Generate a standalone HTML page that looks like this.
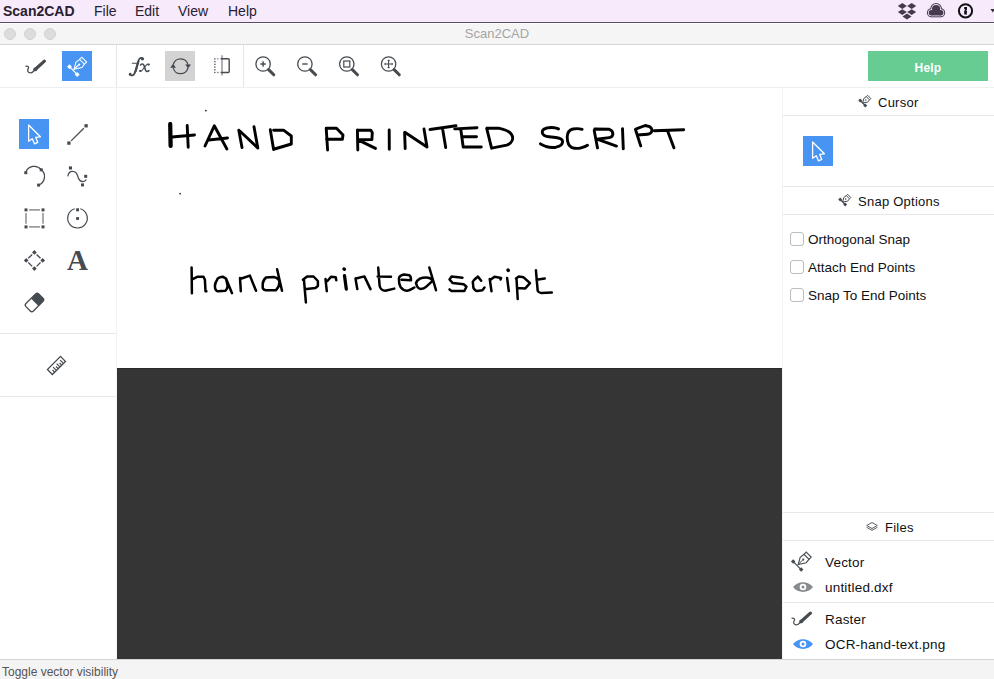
<!DOCTYPE html>
<html><head><meta charset="utf-8">
<style>
*{margin:0;padding:0;box-sizing:border-box}
html,body{width:994px;height:679px;overflow:hidden;background:#fff;font-family:"Liberation Sans",sans-serif;color:#1a1a1a}
.a{position:absolute}
.menubar{left:0;top:0;width:994px;height:23px;background:#f6eafb;border-bottom:1px solid #5b4b68}
.menubar span{position:absolute;top:3px;font-size:14px;color:#2a2030}
.titlebar{left:0;top:24px;width:994px;height:21px;background:#f5f5f5;border-bottom:1px solid #d6d6d6}
.dot{width:12px;height:12px;border-radius:50%;background:#dcdcdc;border:1px solid #d2d2d2;top:4px}
.hline{height:1px;background:#e8e8e8}
.vline{width:1px;background:#f3f3f3}
.rp-h{font-size:13px;color:#111;letter-spacing:0.25px}
.cb{width:14px;height:14px;border:1px solid #b9bcc0;border-radius:3px;background:#fff}
.lbl{font-size:13.5px;color:#111;letter-spacing:0.2px}
.cbl{font-size:13.5px;color:#111;letter-spacing:0px}
</style></head><body>
<!-- menu bar -->
<div class="a menubar">
  <span style="left:3px;font-weight:bold">Scan2CAD</span>
  <span style="left:94px">File</span>
  <span style="left:135px">Edit</span>
  <span style="left:178px">View</span>
  <span style="left:228px">Help</span>
</div>
<!-- title bar -->
<div class="a titlebar">
  <div class="a dot" style="left:4px"></div>
  <div class="a dot" style="left:24px"></div>
  <div class="a dot" style="left:44px"></div>
  <div class="a" style="left:0;width:994px;top:2px;text-align:center;font-size:13px;color:#a4a4a4">Scan2CAD</div>
</div>
<!-- toolbar -->
<div class="a" style="left:62px;top:51px;width:30px;height:30px;background:#4794f3"></div>
<div class="a" style="left:165px;top:51px;width:30px;height:30px;background:#d3d3d3"></div>
<div class="a vline" style="left:116px;top:45px;height:42px;background:#e6e6e6"></div>
<div class="a vline" style="left:243px;top:45px;height:42px;background:#e6e6e6"></div>
<div class="a hline" style="left:0;top:87px;width:994px;background:#efefef"></div>
<div class="a" style="left:868px;top:51px;width:120px;height:30px;background:#66cc92"></div><div class="a" style="left:868px;top:53px;width:120px;height:30px;color:#fff;font-weight:bold;font-size:12px;text-align:center;line-height:30px;letter-spacing:0.2px">Help</div>


<svg class="a" style="left:0;top:0" width="994" height="679" viewBox="0 0 994 679">
<g id="toolbar-icons" fill="none" stroke="#454b51" stroke-width="1.3">
  <!-- raster pencil -->
  <path d="M25.5,66.3 C27.6,65.6 29.3,66.6 28.2,68.6 C27,70.6 27.9,73 30.6,72.9 C31.9,72.8 32.9,72.1 33.6,71.2"/>
  <line x1="35.4" y1="69.2" x2="44.4" y2="61.1" stroke-width="3.2" stroke-linecap="round"/>
  <path d="M33.1,71.4 L34,67.9 L36.7,70.5 Z" fill="#454b51" stroke-width="0.6"/>
  <!-- vector pen (white) -->
  <g stroke="#fff" stroke-width="1.1">
    <line x1="69.5" y1="66.7" x2="77.2" y2="74.5"/>
    <rect x="68.3" y="65.5" width="2.4" height="2.4" fill="#fff" transform="rotate(45 69.5 66.7)"/>
    <rect x="76" y="73.3" width="2.4" height="2.4" fill="#fff" transform="rotate(45 77.2 74.5)"/>
    <path d="M74,69.3 L75.9,62.2 L79.6,59.4 L84.4,64.2 L81.8,67.6 Z"/>
    <path d="M79.6,59.4 L81.8,57.2 L86.6,62 L84.4,64.2"/>
    <line x1="74" y1="69.3" x2="78.5" y2="65"/>
    <circle cx="79.2" cy="64.6" r="1.1" fill="#fff" stroke="none"/>
  </g>
  <!-- rotate -->
  <path d="M173.3,64.6 A7.5,7.5 0 0 1 188,65"/>
  <path d="M187.9,67.9 A7.5,7.5 0 0 1 173.2,67.5"/>
  <path d="M170.2,67.8 L173.1,63.8 L176,67.8 Z" fill="#454b51" stroke="none"/>
  <path d="M185.2,64.6 L188.1,68.6 L191,64.6 Z" fill="#454b51" stroke="none"/>
  <!-- mirror -->
  <line x1="222" y1="55.3" x2="222" y2="75.6" stroke="#9a9ea2" stroke-width="1.6"/>
  <path d="M220.6,58.8 H228.2 Q229.2,58.8 229.2,59.8 V71.5 Q229.2,72.5 228.2,72.5 H220.6" stroke-width="1.4"/>
  <g fill="#454b51" stroke="none"><rect x="214.2" y="58.2" width="1.3" height="1.3"/><rect x="214.2" y="61" width="1.3" height="1.3"/><rect x="214.2" y="63.7" width="1.3" height="1.3"/><rect x="214.2" y="66.4" width="1.3" height="1.3"/><rect x="214.2" y="69.1" width="1.3" height="1.3"/><rect x="214.2" y="71.8" width="1.3" height="1.3"/><rect x="217.2" y="58.2" width="1.4" height="1.3" fill="#8a8e92"/><rect x="217.2" y="71.8" width="1.4" height="1.3" fill="#6a6e72"/></g>
  <!-- zoom in -->
  <circle cx="263.1" cy="64" r="7.2"/>
  <line x1="268.6" y1="69.6" x2="273.8" y2="74.8" stroke-width="3" stroke-linecap="round"/>
  <path d="M260.4,64 H265.8 M263.1,61.3 V66.7" stroke-width="1.4"/>
  <!-- zoom out -->
  <circle cx="304.9" cy="64" r="7.2"/>
  <line x1="310.4" y1="69.6" x2="315.6" y2="74.8" stroke-width="3" stroke-linecap="round"/>
  <path d="M302.2,64 H307.6" stroke-width="1.4"/>
  <!-- zoom fit -->
  <circle cx="346.8" cy="64" r="7.2"/>
  <line x1="352.3" y1="69.6" x2="357.5" y2="74.8" stroke-width="3" stroke-linecap="round"/>
  <rect x="343.8" y="61" width="6" height="6" stroke-width="1.2"/>
  <!-- zoom pan -->
  <circle cx="388.6" cy="64" r="7.2"/>
  <line x1="394.1" y1="69.6" x2="399.3" y2="74.8" stroke-width="3" stroke-linecap="round"/>
  <path d="M385,64 H392.2 M388.6,60.4 V67.6" stroke-width="1.1"/>
  <path d="M384,64 L385.5,62.5 V65.5 Z M393.2,64 L391.7,62.5 V65.5 Z M388.6,59.4 L387.1,60.9 H390.1 Z M388.6,68.6 L387.1,67.1 H390.1 Z" fill="#454b51" stroke="none"/>
</g>
</svg>
<svg class="a" style="left:0;top:0" width="994" height="100" viewBox="0 0 994 100"><g fill="none" stroke="#454b51" stroke-linecap="round">
  <path d="M143.2,58.6 C142,57.2 139.6,57.6 138.7,60.2 C137.7,63.2 136.3,69 134.8,72.8 C133.8,75.4 131.4,76.2 129.6,74.6" stroke-width="1.8"/>
  <path d="M138.3,61.5 C137.5,64.5 136.5,68.5 135.5,71.5" stroke-width="2.2"/>
  <circle cx="142.4" cy="59.3" r="1.3" fill="#454b51" stroke="none"/>
  <circle cx="130.2" cy="74.1" r="1.3" fill="#454b51" stroke="none"/>
  <path d="M132.3,63.3 H138.7" stroke-width="1.1"/>
  <g transform="translate(0.8,0)"><path d="M139.8,65 C141.2,63.5 142.6,63.8 143.2,65.6 L144.6,69.8 C145.2,71.6 146.8,72 148.1,70.6" stroke-width="1.6"/>
  <path d="M148.3,64.4 C147.2,63.7 146.1,64.2 145,65.6 L141.6,70 C140.6,71.4 139.6,71.6 139,70.6" stroke-width="1.1"/>
  <circle cx="147.9" cy="64.6" r="1.1" fill="#454b51" stroke="none"/>
  <circle cx="139.5" cy="71" r="1.1" fill="#454b51" stroke="none"/></g>
</g></svg>

<!-- left panel -->
<div class="a vline" style="left:116px;top:88px;height:571px"></div>
<div class="a" style="left:19px;top:119px;width:30px;height:30px;background:#4794f3"></div>
<div class="a hline" style="left:0;top:333px;width:116px"></div>
<div class="a hline" style="left:0;top:396px;width:116px"></div>


<svg class="a" style="left:0;top:0" width="994" height="679" viewBox="0 0 994 679">
<g fill="none" stroke="#454b51" stroke-width="1.3">
  <!-- select arrow white -->
  <path d="M28.6,125 V141.3 L32.3,138.8 L34.6,143.9 L37.8,142.4 L35.7,137.4 L40.4,136.8 Z" stroke="#fff" stroke-width="1.3" stroke-linejoin="round"/>
  <!-- line tool -->
  <line x1="71.1" y1="140.9" x2="83.8" y2="128.2" stroke-width="1.3"/>
  <rect x="67.25" y="141.45" width="3.3" height="3.3" fill="#454b51" stroke="none"/>
  <rect x="84.45" y="124.15" width="3.3" height="3.3" fill="#454b51" stroke="none"/>
  <!-- arc tool -->
  <path d="M25.8,172.2 A9,9 0 0 1 41.2,169.6 A9,9 0 0 1 38.6,185"/>
  <rect x="24.3" y="171.2" width="3" height="3" fill="#454b51" stroke="none"/>
  <rect x="39.7" y="168.3" width="3" height="3" fill="#454b51" stroke="none"/>
  <rect x="37.1" y="183.6" width="3" height="3" fill="#454b51" stroke="none"/>
  <!-- curve tool -->
  <path d="M67.7,176.3 C68.5,172.5 71,171.2 72.6,171.3 C75.5,171.4 77,173.5 77.7,176 C78.5,179.5 80.5,181.6 82.8,181.6 C84.5,181.6 85.8,180.5 86.4,179.5" stroke-width="1.2"/>
  <rect x="68.9" y="166.4" width="3.1" height="3.1" fill="#454b51" stroke="none"/>
  <rect x="84.2" y="174.8" width="3" height="3" fill="#454b51" stroke="none"/>
  <rect x="81" y="183.4" width="3" height="3" fill="#454b51" stroke="none"/>
  <!-- rect tool -->
  <path d="M29.1,209.9 H39.9 M29.1,226.9 H39.9 M26,213 V223.8 M43,213 V223.8" stroke="#9b9c9e" stroke-width="1.7"/>
  <rect x="24.5" y="208.4" width="3" height="3" fill="#454b51" stroke="none"/>
  <rect x="41.5" y="208.4" width="3" height="3" fill="#454b51" stroke="none"/>
  <rect x="24.5" y="225.4" width="3" height="3" fill="#454b51" stroke="none"/>
  <rect x="41.5" y="225.4" width="3" height="3" fill="#454b51" stroke="none"/>
  <!-- circle tool -->
  <path d="M80.3,208.8 A9.8,9.8 0 1 1 74.7,208.8" stroke-width="1.2"/>
  <rect x="76.1" y="208.3" width="2.9" height="3" fill="#454b51" stroke="none"/>
  <rect x="76.1" y="217.1" width="2.9" height="2.8" fill="#454b51" stroke="none"/>
  <!-- node/diamond tool -->
  <path d="M36.6,254.5 L40.5,258.3 M40.5,262.5 L36.6,266.4 M32.2,266.4 L28.3,262.5 M28.3,258.3 L32.2,254.5" stroke-width="1.3"/>
  <rect x="32.75" y="250.75" width="3.3" height="3.3" fill="#454b51" stroke="none" transform="rotate(45 34.4 252.4)"/>
  <rect x="41.05" y="258.75" width="3.3" height="3.3" fill="#454b51" stroke="none" transform="rotate(45 42.7 260.4)"/>
  <rect x="32.75" y="266.95" width="3.3" height="3.3" fill="#454b51" stroke="none" transform="rotate(45 34.4 268.6)"/>
  <rect x="24.55" y="258.75" width="3.3" height="3.3" fill="#454b51" stroke="none" transform="rotate(45 26.2 260.4)"/>
  <!-- eraser -->
  <g transform="rotate(-45 34.5 302.4)">
    <rect x="25.5" y="297.15" width="18" height="10.5" rx="2.2" stroke-width="1.3"/>
    <path d="M34.8,297.15 H41.3 A2.2,2.2 0 0 1 43.5,299.35 V305.45 A2.2,2.2 0 0 1 41.3,307.65 H34.8 Z" fill="#454b51" stroke="none"/>
  </g>
  <!-- ruler -->
  <g transform="rotate(-45 56.45 365.45)">
    <rect x="47.2" y="361.95" width="18.5" height="7" stroke-width="1.3"/>
    <path d="M50.4,368.9 V365.9 M52.9,368.9 V364.3 M55.4,368.9 V365.9 M57.9,368.9 V364.3 M60.4,368.9 V365.9 M62.9,368.9 V364.3" stroke-width="1.2"/>
  </g>
</g>
</svg>
<div class="a" style="left:67px;top:245px;font-family:'Liberation Serif',serif;font-weight:bold;font-size:29px;color:#454b51;line-height:30px">A</div>

<!-- canvas -->
<div class="a" style="left:117px;top:88px;width:665px;height:280px;background:#fff"></div>
<div class="a" style="left:117px;top:368px;width:665px;height:291px;background:#353535;border-top:1px solid #2a2a2a"></div>


<svg class="a" style="left:0;top:0" width="994" height="679" viewBox="0 0 994 679">
<g fill="none" stroke="#000" stroke-width="2.9" stroke-linecap="round" stroke-linejoin="round">
  <!-- HAND -->
  <path d="M170.4,123.5 L170.8,146 M187.2,125.5 L188.2,147.2 M172,137 L194.5,135"/>
  <path d="M170.2,124 L170.6,146" stroke-width="4.2"/>
  <path d="M205,146 L214.3,125.8 L226.9,149 M208.5,140 L227.5,138"/>
  <path d="M238.8,130.2 L242,147.6 M239.8,131 L257.8,148 M254,126.8 L257.8,148"/>
  <path d="M270.3,129.8 L273.6,149.6 M273.6,130.2 L283.5,130.2 L291.3,136 L291.3,144 L283,146.5 L274.5,149"/>
  <!-- PRINTED -->
  <path d="M326.2,128.2 L327.6,150 M326.2,128.3 L336.5,128.3 L343,135 L342.4,139.2 L326.5,139.3"/>
  <path d="M357.4,130 L357.8,150 M357.4,130.2 L370.7,130.2 L372.3,132.5 L371.9,139.6 L357.8,139.7 M358.6,140.1 L375.5,148.4"/>
  <path d="M389.2,130 L389.3,149.2"/>
  <path d="M404.6,132.5 L405.2,148.6 M404.8,132.3 L427,147 M424,129 L427,147"/>
  <path d="M430,129.5 L456,125.8 M442.7,129.5 L445.7,147.6"/>
  <path d="M460.8,129.5 L463.2,147 M454.7,128.9 L477,127.7 M463.2,136.7 L476.5,136.7 M463.2,147 L481.3,147"/>
  <path d="M486.7,128.3 L491.6,148.2 M487,128.3 L499.4,128.3 C508,130 512.7,134 512.7,138.5 C512.5,142 509,144.5 506.7,145.2 L491.6,148.2"/>
  <!-- SCRIPT -->
  <path d="M558.5,128.9 C556,127.8 553.5,127.4 551.3,127.5 C546,127.8 542.2,129.5 542.2,132 C542.2,135 545,136.4 549,136.8 L555.8,137.5 C560,138.2 562.6,139.5 562.6,141.5 C562.6,144.5 559.5,146.5 556,147.2 C552,147.8 549.5,147.5 546,146.5 C543.5,145.5 541.5,144.6 540.4,143.8"/>
  <path d="M582.1,129.3 C579,128.5 576,128.5 573,129 C569,130 567.2,133 567.2,137 C567.2,142 568.5,146 572,147.6 C575,148.6 578.5,148.5 581,147.8 C584,147 586,146.2 587.5,145.2"/>
  <path d="M594.2,130.5 L597.5,147.9 M594.8,129 L609.3,129.3 C611.5,130 612.9,132 612.9,134.3 C612.5,136.5 611,137.5 609.3,137.6 L596.6,139.3 M598.4,139.7 L616.5,146.1"/>
  <path d="M622.5,128.6 L623.3,148.9"/>
  <path d="M635.4,129.3 L640.7,145.9 M636.3,128.8 L645.2,125.5 L649.7,126.7 C651,127.5 652,129 652,130.8 C651.5,132.5 649.5,134 647.5,134.2 L637.6,135"/>
  <path d="M654.2,130.8 L683.7,129.7 M667.8,131.6 L673.9,147.8"/>
  <g stroke-width="2.5"><!-- hand -->
  <path d="M191.6,267.5 L191.9,293.3 M192.7,279.2 L197.7,276.7 L203.5,276.7 L204.9,279.7 L205.5,291.2 L206.4,291.2"/>
  <path d="M226,278.6 L222.6,276.7 C219.5,277 217.5,278.5 217.1,279.7 C215.5,282 214.9,284 214.9,286.3 C215,289 216,291.5 218.2,291.2 L225.4,290.8 C227,289.5 227.6,287.5 227.6,285.8 L226,278.6 L232,293.2"/>
  <path d="M240,278 L240.8,291.2 M241.5,278.5 L249.9,275.6 L256,290.8"/>
  <path d="M273.7,276.9 L266,277.5 C264,279.5 262.7,282 262.7,284.1 L262.7,288 C263.5,289.8 265,290.2 266,290.2 L276,290.2 C278,288 279.5,285 279.5,282 L278.7,279.7 C277,277.5 275,277 273.7,276.9 M277.1,269.2 L282,290.8"/>
  <!-- printed -->
  <path d="M304,280.4 L305.9,302.4 M302.9,279.8 L307.1,276.5 L313.5,276.5 L317.9,281 L317.9,286.1 L315.4,288 L304.6,289.2"/>
  <path d="M325.5,279.1 L326.8,291.2 M327.4,281 L331.2,276.7 L335.7,277.2 L336.3,280.2"/>
  <path d="M344.5,275.6 L346.3,289.1" stroke-width="3.3"/>
  <path d="M344,269 L344.4,269.2" stroke-width="3.4"/>
  <path d="M355.5,278.6 L357.3,289.1 M356,278.5 L364.4,276.4 L370.5,289.1"/>
  <path d="M378.2,267.5 L379.6,285.6 C380,288.5 382.5,290.8 385.4,290.8 L394.3,288.6 M377.7,276.5 L391,276.7"/>
  <path d="M401.6,279.7 L411,280.3 C411,277.5 410.5,275.8 409.4,275.3 L403.9,274.4 C400.8,275 399,276.5 398.9,278.6 C398.8,282 399.4,285 400.5,286.9 C402.5,289.5 404.5,290.8 407.2,290.8 C410,290.5 412.5,288.5 414.4,287.5"/>
  <path d="M426,277.5 C423,277.5 421.3,278 419.9,278.6 C417.5,280 416.5,281.5 416,283 L417.1,286.4 C418,288 419,289 420.5,289.1 C423,289 425,288 426,286.9 L432.6,280.8 C431.5,278.5 429,277.5 426,277.5 M429.3,267.5 L436,290.2"/>
  <!-- script -->
  <path d="M462.5,277.7 L451.6,276.6 L449.5,279.5 L452.8,283.1 L463.7,284.3 L466.5,286.7 L464.3,291 L451.6,291 L449.5,289.4"/>
  <path d="M481.2,280.7 L477.9,276.6 C475.5,278.5 473.5,280 472.8,281.9 L473.4,287.9 C474.5,289.8 475.8,291 477,291 L482.4,290.3 L484.5,287.6"/>
  <path d="M489.7,278.9 L491.5,291.2 M490.9,279.5 L494.5,276.8 L501.1,278 L500.5,279.5"/>
  <path d="M507.1,277.9 L508.8,291.1"/>
  <path d="M508,270 L508.3,270.4" stroke-width="3.4"/>
  <path d="M516.5,278.5 L517.7,299 M516,278.5 L518.8,276.5 L523.6,277.3 L530,283.2 L525.3,288.4 L517.1,287.9"/>
  <path d="M535.9,270.2 L537.7,290.8 C538.5,292.5 539.5,293 541.2,293.1 L551.8,292.6 M536.5,279.7 L544.8,278.5"/>
  </g>
  <path d="M205.8,110.6 L206,110.8 M180,193.6 L180.2,193.8" stroke-width="1.4"/>
</g>
</svg>

<!-- right panel -->
<div class="a vline" style="left:782px;top:88px;height:571px"></div>
<div class="a hline" style="left:783px;top:115px;width:211px"></div>
<div class="a rp-h" style="left:878px;top:95px">Cursor</div>
<div class="a" style="left:803px;top:136px;width:30px;height:30px;background:#4794f3"></div>
<div class="a hline" style="left:783px;top:186px;width:211px"></div>
<div class="a rp-h" style="left:858px;top:194px">Snap Options</div>
<div class="a hline" style="left:783px;top:214px;width:211px"></div>
<div class="a cb" style="left:790px;top:232px"></div>
<div class="a cbl" style="left:808px;top:232px">Orthogonal Snap</div>
<div class="a cb" style="left:790px;top:260px"></div>
<div class="a cbl" style="left:808px;top:260px">Attach End Points</div>
<div class="a cb" style="left:790px;top:288px"></div>
<div class="a cbl" style="left:808px;top:288px">Snap To End Points</div>

<div class="a hline" style="left:783px;top:512px;width:211px"></div>
<div class="a rp-h" style="left:885px;top:520px">Files</div>
<div class="a hline" style="left:783px;top:540px;width:211px"></div>
<div class="a lbl" style="left:825px;top:555px">Vector</div>
<div class="a lbl" style="left:825px;top:580px">untitled.dxf</div>
<div class="a hline" style="left:783px;top:602px;width:211px"></div>
<div class="a lbl" style="left:825px;top:612px">Raster</div>
<div class="a lbl" style="left:825px;top:637px">OCR-hand-text.png</div>


<svg class="a" style="left:0;top:0" width="994" height="679" viewBox="0 0 994 679">
<g fill="none" stroke="#454b51" stroke-width="1.2">
  <!-- cursor header nib -->
  <g id="nib">
    <line x1="860.2" y1="100.5" x2="865.2" y2="105.5" stroke-width="1.1"/>
    <rect x="858.8" y="99.1" width="2.8" height="2.8" fill="#454b51" stroke="none" transform="rotate(45 860.2 100.5)"/>
    <rect x="863.8" y="104.1" width="2.8" height="2.8" fill="#454b51" stroke="none" transform="rotate(45 865.2 105.5)"/>
    <path d="M862.6,103 L863.8,98.5 L866.3,96.6 L869.5,99.8 L867.6,102.2 Z" stroke-width="1"/>
    <path d="M866.3,96.6 L867.6,95.3 L870.8,98.5 L869.5,99.8" stroke-width="1"/>
    <circle cx="865.7" cy="100" r="0.8" fill="#454b51" stroke="none"/>
  </g>
  <use href="#nib" transform="translate(-20,99)"/>
  <!-- cursor white arrow -->
  <path transform="translate(784,17)" d="M28.6,125 V141.3 L32.3,138.8 L34.6,143.9 L37.8,142.4 L35.7,137.4 L40.4,136.8 Z" stroke="#fff" stroke-width="1.3" stroke-linejoin="round"/>
  <!-- files layers -->
  <path d="M866.7,525.5 L872,522.5 L877.3,525.5 L872,528.5 Z" stroke="#5a5f64" stroke-width="1"/>
  <path d="M866.7,527.3 L872,530.3 L877.3,527.3" stroke="#5a5f64" stroke-width="1"/>
  <!-- vector nib big -->
  <g stroke="#454b51">
    <line x1="793.2" y1="561.6" x2="801.2" y2="569.6" stroke-width="1.2"/>
    <rect x="791.6" y="560" width="3.2" height="3.2" fill="#454b51" stroke="none" transform="rotate(45 793.2 561.6)"/>
    <rect x="799.6" y="568" width="3.2" height="3.2" fill="#454b51" stroke="none" transform="rotate(45 801.2 569.6)"/>
    <path d="M798.2,564.5 L800.2,557.3 L804,554.3 L809,559.3 L806.2,562.7 Z" stroke-width="1.1"/>
    <path d="M804,554.3 L806.2,552.1 L811.2,557.1 L809,559.3" stroke-width="1.1"/>
    <line x1="798.2" y1="564.5" x2="802.6" y2="560.1" stroke-width="1"/>
    <circle cx="803.3" cy="559.6" r="1.1" fill="#454b51" stroke="none"/>
  </g>
  <!-- raster pencil -->
  <g transform="translate(766,552)">
    <path d="M25.5,66.3 C27.6,65.6 29.3,66.6 28.2,68.6 C27,70.6 27.9,73 30.6,72.9 C31.9,72.8 32.9,72.1 33.6,71.2"/>
    <line x1="35.4" y1="69.2" x2="44.4" y2="61.1" stroke-width="3.2" stroke-linecap="round"/>
    <path d="M33.1,71.4 L34,67.9 L36.7,70.5 Z" fill="#454b51" stroke-width="0.6"/>
  </g>
  <!-- eyes -->
  <path d="M793,587 C798,580.5 808,580.5 813,587 C808,593.5 798,593.5 793,587 Z" fill="#888b8e" stroke="none"/>
  <circle cx="803" cy="587" r="3.3" fill="#fff" stroke="none"/>
  <circle cx="803" cy="587" r="1.5" fill="#888b8e" stroke="none"/>
  <path d="M793,644 C798,637.5 808,637.5 813,644 C808,650.5 798,650.5 793,644 Z" fill="#4794f3" stroke="none"/>
  <circle cx="803" cy="644" r="3.3" fill="#fff" stroke="none"/>
  <circle cx="803" cy="644" r="1.5" fill="#4794f3" stroke="none"/>
</g>
<!-- menu bar status icons -->
<g fill="#463a4f">
  <path d="M897.8,6 L902.3,3 L906.8,6 L902.3,9 Z"/>
  <path d="M907.2,6 L911.7,3 L916.2,6 L911.7,9 Z"/>
  <path d="M897.8,12.1 L902.3,9.2 L906.8,12.1 L902.3,15 Z"/>
  <path d="M907.2,12.1 L911.7,9.2 L916.2,12.1 L911.7,15 Z"/>
  <path d="M902.5,16.6 L907,13.6 L911.5,16.6 L907,19.6 Z"/>
  <g fill="#463a4f"><circle cx="931.4" cy="12.8" r="4.5"/><circle cx="936.1" cy="9" r="5.9"/><circle cx="940.7" cy="12.8" r="4.5"/><rect x="931.4" y="11" width="9.3" height="6.3"/></g>
  <g fill="#f6eafb"><circle cx="931.4" cy="12.8" r="3.5"/><circle cx="936.1" cy="9" r="4.9"/><circle cx="940.7" cy="12.8" r="3.5"/><rect x="931.4" y="11" width="9.3" height="5.3"/></g>
  <g fill="#463a4f"><circle cx="931.4" cy="12.8" r="2.7"/><circle cx="936.1" cy="9" r="4.1"/><circle cx="940.7" cy="12.8" r="2.7"/><rect x="931.4" y="11" width="9.3" height="4.5"/></g>
  <circle cx="965.5" cy="10.8" r="6.6" fill="none" stroke="#111" stroke-width="2"/>
  <path d="M964.2,7 H967 V9.6 L966.2,10.4 L967,11.2 V12.4 L966.4,13 L967,13.6 V14.6 H964.2 V10.4 H965 V9.3 H964.2 Z" fill="#111"/>
  <path d="M990.5,9 L995,9 L992.7,12.6 Z" fill="#333"/>
</g>
</svg>

<!-- status bar -->
<div class="a" style="left:0;top:659px;width:994px;height:20px;background:#f4f4f4;border-top:1px solid #d4d4d4"></div>
<div class="a" style="left:2px;top:665px;font-size:12px;color:#555">Toggle vector visibility</div>
</body></html>
